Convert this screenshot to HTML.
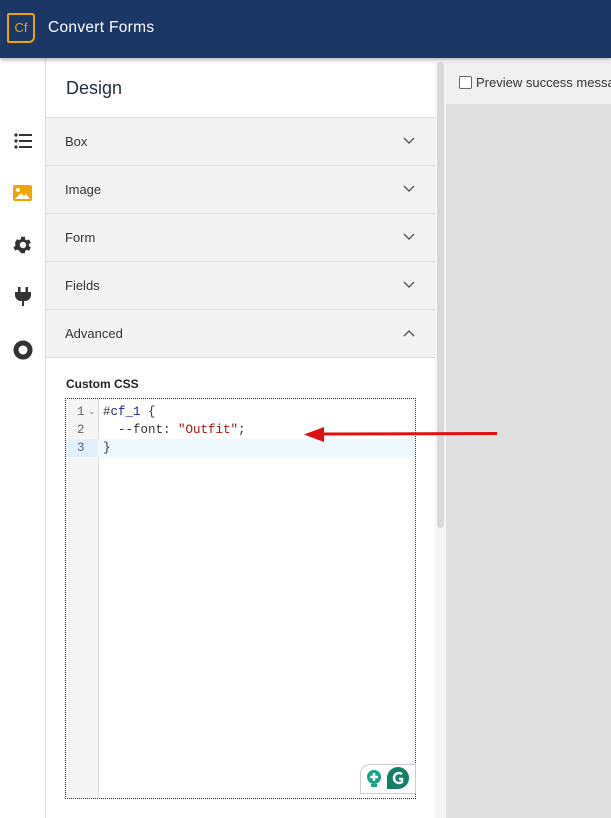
<!DOCTYPE html>
<html><head><style>
body{margin:0;width:611px;height:818px;overflow:hidden;position:relative;font-family:"Liberation Sans",sans-serif;background:#fff}
.hdr{position:absolute;left:0;top:0;width:611px;height:58px;background:#1b3766;box-shadow:0 2px 4px rgba(0,0,0,.3);z-index:2}
.logo{position:absolute;left:7px;top:13px;width:28px;height:30px;border:2px solid #f0a500;border-radius:2px 3px 6px 2px;box-sizing:border-box;color:#f0a500;font-size:13px;line-height:25px;text-align:center}
.title{position:absolute;left:48px;top:19px;color:#fff;font-size:15.5px;letter-spacing:0.3px}
.side{position:absolute;left:0;top:58px;width:45px;height:760px;border-right:1px solid #ddd;background:#fff}
.panel{position:absolute;left:46px;top:62px;width:389px;height:756px;background:#fff}
.design{position:absolute;left:20px;top:16px;font-size:18px;color:#1f2d3d}
.row{position:absolute;left:0;width:389px;height:47px;background:#f3f3f3;border-top:1px solid #ddd;font-size:13px;color:#333;line-height:47px;text-indent:19px}
.row svg{position:absolute;right:20px;top:19px}
.track{position:absolute;left:435px;top:62px;width:11px;height:756px;background:#f5f5f5}
.thumb{position:absolute;left:437px;top:62px;width:7px;height:466px;background:#d8d8d8;border-radius:4px}
.right{position:absolute;left:446px;top:62px;width:165px;height:756px;background:#e0e0e0}
.rtop{position:absolute;left:0;top:0;width:165px;height:42px;background:#f0f0f0;font-size:13px;color:#333}
.cb{position:absolute;left:13px;top:14px;width:11px;height:11px;border:1px solid #666;border-radius:2px;background:#fff}
.ed{position:absolute;left:65px;top:398px;width:351px;height:401px;border:1px dotted #333;box-sizing:border-box;font-family:"Liberation Mono",monospace;font-size:12.5px}
.gut{position:absolute;left:0;top:0;width:32px;height:100%;background:#f5f5f5;border-right:1px solid #ddd}
.ln{position:absolute;left:0;width:100%;height:18px;line-height:18px;white-space:pre}
</style></head><body>
<div class="hdr"><div class="logo">Cf</div><div class="title">Convert Forms</div></div>
<div class="side">
<svg style="position:absolute;left:14px;top:75px" width="18" height="16" viewBox="0 0 18 16" fill="#333"><circle cx="2" cy="2" r="1.6"/><circle cx="2" cy="8" r="1.6"/><circle cx="2" cy="14" r="1.6"/><rect x="5" y="1" width="13" height="2"/><rect x="5" y="7" width="13" height="2"/><rect x="5" y="13" width="13" height="2"/></svg>
<svg style="position:absolute;left:13px;top:127px" width="19" height="16" viewBox="0 0 19 16"><rect width="19" height="16" rx="2" fill="#f0a500"/><circle cx="5" cy="5" r="2" fill="#fff"/><path d="M2 14 L8 8 L11 11 L13 9 L17 14Z" fill="#fff"/></svg>
<svg style="position:absolute;left:12px;top:176px" width="22" height="22" viewBox="0 0 24 24" fill="#333"><path d="M19.4 13a7.5 7.5 0 000-2l2.1-1.6-2-3.5-2.5 1a7 7 0 00-1.7-1L15 3h-4l-.4 2.7a7 7 0 00-1.7 1l-2.5-1-2 3.5L4.6 11a7.5 7.5 0 000 2l-2.1 1.6 2 3.5 2.5-1a7 7 0 001.7 1L11 21h4l.4-2.7a7 7 0 001.7-1l2.5 1 2-3.5zM13 15.5a3.5 3.5 0 110-7 3.5 3.5 0 010 7z" transform="translate(-1 0)"/></svg>
<svg style="position:absolute;left:15px;top:229px" width="16" height="19" viewBox="0 0 16 19" fill="#333"><rect x="3" y="0" width="2.5" height="6"/><rect x="10.5" y="0" width="2.5" height="6"/><path d="M0 5h16v3a6 6 0 01-6 6H9v5H7v-5H6a6 6 0 01-6-6z"/></svg>
<svg style="position:absolute;left:13px;top:282px" width="20" height="20" viewBox="0 0 20 20"><circle cx="10" cy="10" r="7" fill="none" stroke="#333" stroke-width="5"/></svg>
</div>
<div class="panel">
<div class="design">Design</div>
<div class="row" style="top:55px">Box<svg width="12" height="8" viewBox="0 0 12 8"><path d="M1 1l5 5 5-5" fill="none" stroke="#555" stroke-width="1.4"/></svg></div>
<div class="row" style="top:103px">Image<svg width="12" height="8" viewBox="0 0 12 8"><path d="M1 1l5 5 5-5" fill="none" stroke="#555" stroke-width="1.4"/></svg></div>
<div class="row" style="top:151px">Form<svg width="12" height="8" viewBox="0 0 12 8"><path d="M1 1l5 5 5-5" fill="none" stroke="#555" stroke-width="1.4"/></svg></div>
<div class="row" style="top:199px">Fields<svg width="12" height="8" viewBox="0 0 12 8"><path d="M1 1l5 5 5-5" fill="none" stroke="#555" stroke-width="1.4"/></svg></div>
<div class="row" style="top:247px;border-bottom:1px solid #ddd">Advanced<svg width="12" height="8" viewBox="0 0 12 8"><path d="M1 7l5-5 5 5" fill="none" stroke="#555" stroke-width="1.4"/></svg></div>
<div style="position:absolute;left:20px;top:315px;font-size:12px;font-weight:bold;color:#222">Custom CSS</div>
</div>
<div class="ed">
<div class="gut"></div>
<div class="ln" style="top:40px;background:#eef8ff"></div>
<div class="ln" style="top:40px;width:32px;background:#e2f0fb"></div>
<div class="ln" style="top:4px;color:#333"><span style="position:absolute;left:11px;color:#666">1</span><span style="position:absolute;left:22px;font-size:9px;color:#888">⌄</span><span style="position:absolute;left:37px">#<span style="color:#1a1aa6">cf_1</span> {</span></div>
<div class="ln" style="top:22px;color:#333"><span style="position:absolute;left:11px;color:#666">2</span><span style="position:absolute;left:37px">  --font: <span style="color:#a11">"Outfit"</span>;</span></div>
<div class="ln" style="top:40px;color:#333"><span style="position:absolute;left:11px;color:#666">3</span><span style="position:absolute;left:37px">}</span></div>
<div style="position:absolute;left:294px;top:365px;width:54px;height:28px;border:1px solid #ccd;border-radius:10px 0 0 0;background:#fff"></div>
<svg style="position:absolute;left:300px;top:370px" width="16" height="20" viewBox="0 0 16 20"><circle cx="8" cy="8" r="7" fill="#15a38a"/><rect x="5" y="15" width="6" height="3" fill="#15a38a"/><path d="M8 4v8M4 8h8" stroke="#fff" stroke-width="2.5"/></svg>
<svg style="position:absolute;left:320px;top:367px" width="24" height="24" viewBox="0 0 24 24"><path d="M12 1a11 11 0 110 22H1V12A11 11 0 0112 1z" fill="#127f66"/><path d="M16 8a5 5 0 100 8v-3h-3" fill="none" stroke="#fff" stroke-width="2.5"/></svg>
</div>
<div class="track"></div><div class="thumb"></div>
<div class="right"><div class="rtop"><div class="cb"></div><span style="position:absolute;left:30px;top:13px;white-space:nowrap">Preview success message</span></div></div>
<svg style="position:absolute;left:300px;top:424px" width="200" height="20" viewBox="0 0 200 20"><path d="M197 9.5L20 10" stroke="#e01010" stroke-width="3"/><path d="M4 10.5L24 3v15z" fill="#e01010"/></svg>
</body></html>
